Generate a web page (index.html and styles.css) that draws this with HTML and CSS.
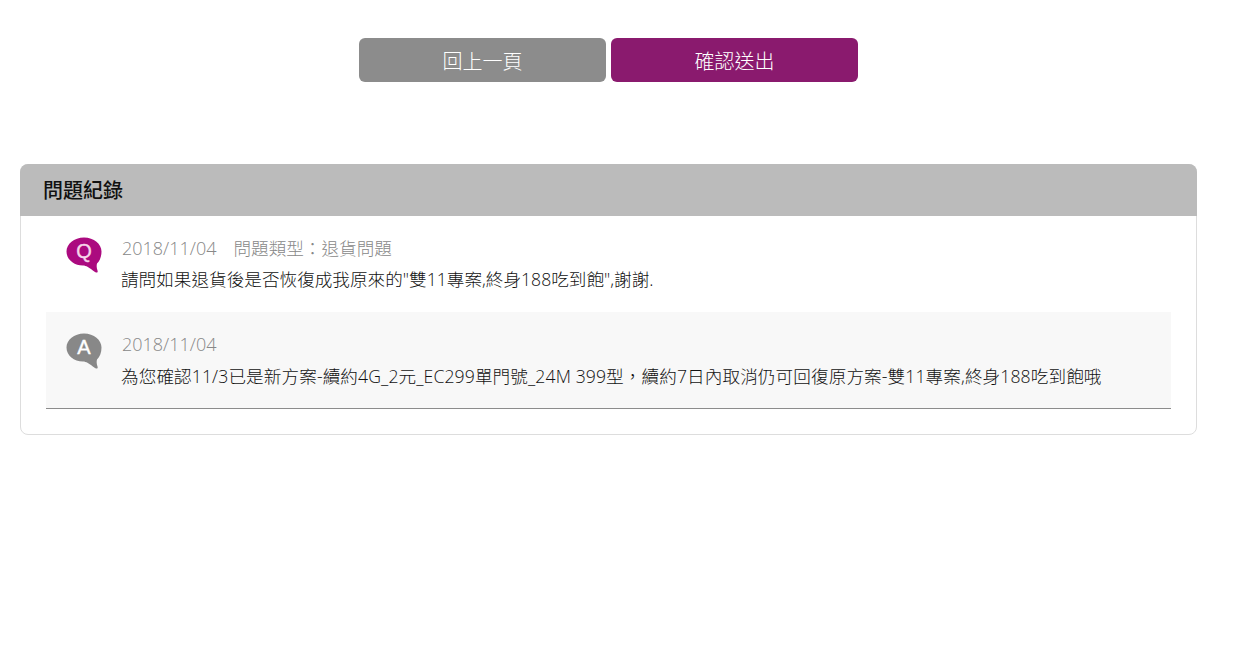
FILE: index.html
```html
<!DOCTYPE html>
<html lang="zh-Hant">
<head>
<meta charset="utf-8">
<title>問題紀錄</title>
<link rel="stylesheet" href="styles.css">
</head>
<body>
<div class="actions">
  <a class="btn btn-back">回上一頁</a>
  <a class="btn btn-submit">確認送出</a>
</div>
<section class="panel">
  <h2 class="panel-head">問題紀錄</h2>
  <div class="panel-body">
    <div class="row row-q">
      <svg class="bubble" viewBox="0 0 36 36" width="36" height="36">
        <path class="fill-q" d="M18 0.500C8 0.500 0.500 7 0.500 14.500C0.500 22.500 8 28.500 17 28.500C20 28.500 23 30.500 29 35C31.500 36.500 32 35 31.500 33.500C30.500 31 30.500 28.500 31 26.500C33.800 24 35.500 19.500 35.500 14.500C35.500 7 28 0.500 18 0.500Z"/>
        <text class="bubble-letter letter-q" x="18" y="21">Q</text>
      </svg>
      <div class="row-text">
        <p class="meta">2018/11/04<span class="meta-type">問題類型：退貨問題</span></p>
        <p class="msg msg-short">請問如果退貨後是否恢復成我原來的"雙11專案,終身188吃到飽",謝謝.</p>
      </div>
    </div>
    <div class="row row-a">
      <svg class="bubble" viewBox="0 0 36 36" width="36" height="36">
        <path class="fill-a" d="M18 0.500C8 0.500 0.500 7 0.500 14.500C0.500 22.500 8 28.500 17 28.500C20 28.500 23 30.500 29 35C31.500 36.500 32 35 31.500 33.500C30.500 31 30.500 28.500 31 26.500C33.800 24 35.500 19.500 35.500 14.500C35.500 7 28 0.500 18 0.500Z"/>
        <text class="bubble-letter" x="18" y="20.500">A</text>
      </svg>
      <div class="row-text">
        <p class="meta">2018/11/04</p>
        <p class="msg msg-long">為您確認11/3已是新方案-續約4G_2元_EC299單門號_24M 399型，續約7日內取消仍可回復原方案-雙11專案,終身188吃到飽哦</p>
      </div>
    </div>
  </div>
</section>
</body>
</html>
```
FILE: styles.css
```css
* { box-sizing: border-box; }
html, body { margin: 0; padding: 0; background: #fff; }
body {
  height: 648px;
  overflow: hidden;
  padding: 38px 44px 0 20px;
  font-family: "Open Sans", "Noto Sans CJK TC", sans-serif;
  font-weight: 300;
  color: #222;
}
.actions {
  display: flex;
  justify-content: center;
  gap: 5px;
  width: 1177px;
}
.btn {
  width: 247px;
  height: 44px;
  border-radius: 6px;
  color: #fff;
  font-size: 20px;
  line-height: 47px;
  text-align: center;
}
.btn-back { background: #8c8c8c; }
.btn-submit { background: #8a1a6e; }
.panel {
  width: 1177px;
  height: 271px;
  margin-top: 82px;
  border: 1px solid #ddd;
  border-radius: 8px;
}
.panel-head {
  margin: -1px -1px 0;
  height: 52px;
  padding-left: 23px;
  background: #bbb;
  border-radius: 8px 8px 0 0;
  color: #111;
  font-size: 20px;
  font-weight: 500;
  line-height: 53px;
}
.panel-body { padding: 0 25px; }
.row {
  display: flex;
  align-items: flex-start;
  padding: 16px 0 0 20px;
}
.row-q { height: 96px; }
.row-a {
  height: 97px;
  background: #f8f8f8;
  border-bottom: 1px solid #8c8c8c;
}
.bubble { flex: none; margin-top: 5px; }
.fill-q { fill: #ab0a7f; }
.fill-a { fill: #888; }
.bubble-letter {
  fill: #fff;
  font-family: "Liberation Sans", sans-serif;
  font-size: 20px;
  font-weight: 400;
  text-anchor: middle;
  stroke: #fff;
  stroke-width: 0.4;
}
.letter-q { fill: #f6d5ea; stroke: #f6d5ea; }
.row-text { margin-left: 20px; }
.row-text p { margin: 0; font-size: 17.6px; line-height: 32px; white-space: nowrap; }
.row-text .meta { font-size: 18px; color: #888; }
.meta-type { margin-left: 17px; font-size: 17.6px; }
.row-text .msg { color: #111; margin-left: -1px; }
.row-text .msg-short { line-height: 30px; letter-spacing: 0.02px; }
.row-text .msg-long { letter-spacing: 0.11px; }
```
